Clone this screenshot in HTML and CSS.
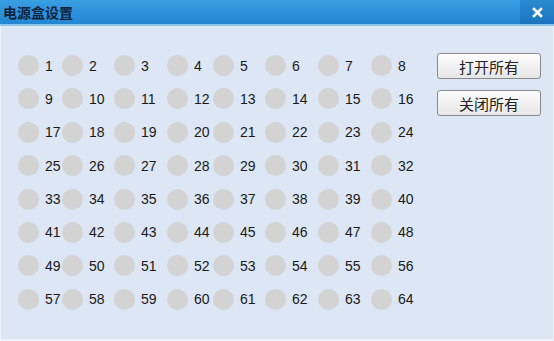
FILE: index.html
```html
<!DOCTYPE html>
<html lang="zh-CN">
<head>
    <meta charset="UTF-8">
    <title>电源盒设置</title>
    <link rel="stylesheet" href="styles.css">
</head>
<body>
<div class="window">
    <div class="title-bar">
        <span class="title">电源盒设置</span>
        <span class="close">
            <svg width="11" height="11" viewBox="0 0 11 11"><path d="M2 2 L9 9 M9 2 L2 9" stroke="#fff" stroke-width="2.6" stroke-linecap="square"/></svg>
        </span>
    </div>
    <div class="content">
        <div class="ports" id="ports"></div>
        <div class="actions">
            <button class="btn">打开所有</button>
            <button class="btn">关闭所有</button>
        </div>
    </div>
</div>
<script>
// build the 64 port indicators
const ports = document.getElementById('ports');
for (let i = 1; i <= 64; i++) {
    const cell = document.createElement('div');
    cell.className = 'port';
    cell.innerHTML = '<span class="dot"></span><span class="num">' + i + '</span>';
    ports.appendChild(cell);
}
</script>
</body>
</html>
```

FILE: styles.css
```css
body {
    margin: 0;
    font-family: "Liberation Sans", "Noto Sans CJK SC", sans-serif;
    background: #dde6f4;
}
.window {
    width: 554px;
    height: 341px;
    box-sizing: border-box;
    background: #dce6f4;
    border-left: 1px solid #eef3fb;
    border-right: 1px solid #eef3fb;
    border-bottom: 2px solid #eef3fb;
    display: flex;
    flex-direction: column;
}
.title-bar {
    height: 24px;
    background: linear-gradient(#3a9ee2, #2386d2);
    border-bottom: 2px solid #8cc4ec;
    display: flex;
    align-items: center;
    margin: 0 -1px;
}
.title {
    flex: 1;
    padding-left: 3px;
    font-size: 14px;
    font-weight: bold;
    color: #10223a;
    font-family: "Noto Sans CJK SC", sans-serif;
}
.close {
    width: 34px;
    height: 24px;
    background: linear-gradient(#2a8bd0, #1a74bd);
    display: flex;
    align-items: center;
    justify-content: center;
}
.content {
    display: flex;
    padding: 27px 12px 0 17px;
}
.ports {
    display: grid;
    grid-template-columns: 44px 52px 53px 46px 52px 53px 53px 40px;
    row-gap: 12.4px;
    margin-top: 2px;
    width: 393px;
}
.port {
    display: flex;
    align-items: center;
    height: 21px;
}
.dot {
    width: 21px;
    height: 21px;
    border-radius: 50%;
    background: #d3d3d3;
    flex-shrink: 0;
}
.num {
    margin-left: 6px;
    font-size: 14px;
    color: #1a1a1a;
    white-space: nowrap;
}
.actions {
    margin-left: auto;
    display: flex;
    flex-direction: column;
    gap: 11px;
}
.btn {
    width: 104px;
    height: 26px;
    border: 1px solid #8a8a8a;
    border-radius: 3px;
    background: linear-gradient(#fdfdfd, #e6e6e6);
    font-family: "Noto Sans CJK SC", sans-serif;
    font-size: 15px;
    color: #222;
    padding: 0;
}
```
